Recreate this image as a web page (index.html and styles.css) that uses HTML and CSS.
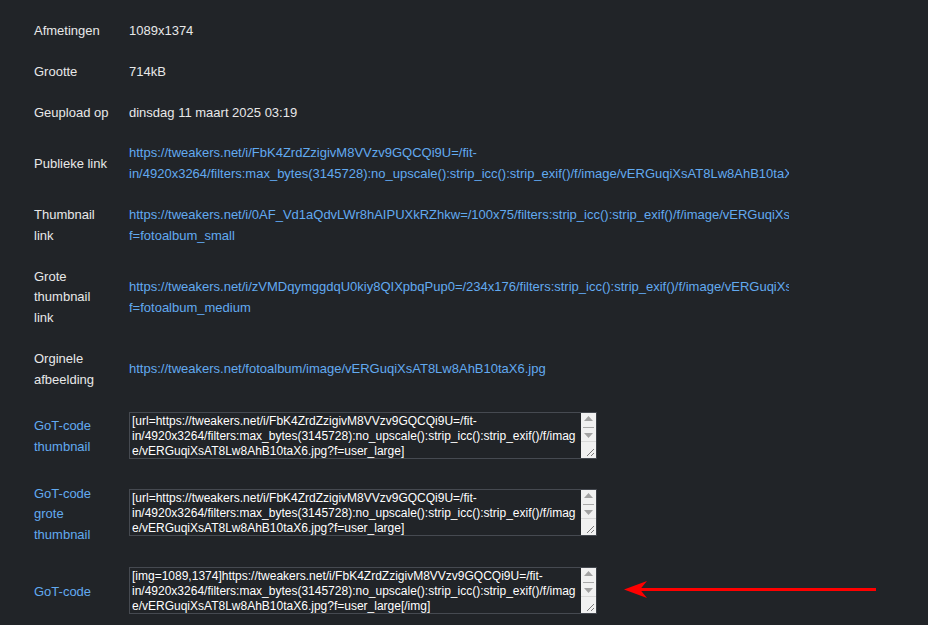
FILE: index.html
```html
<!DOCTYPE html>
<html lang="nl">
<head>
<meta charset="utf-8">
<title>Afbeelding details</title>
<link rel="stylesheet" href="styles.css">
</head>
<body>
<div class="page">
  <div class="details">
    <div class="row"><div class="label">Afmetingen</div><div class="value">1089x1374</div></div>
    <div class="row"><div class="label">Grootte</div><div class="value">714kB</div></div>
    <div class="row"><div class="label">Geupload op</div><div class="value">dinsdag 11 maart 2025 03:19</div></div>
    <div class="row"><div class="label">Publieke link</div><div class="value"><a class="link" href="#">https://tweakers.net/i/FbK4ZrdZzigivM8VVzv9GQCQi9U=/fit-in/4920x3264/filters:max_bytes(3145728):no_upscale():strip_icc():strip_exif()/f/image/vERGuqiXsAT8Lw8AhB10taX6.jpg</a></div></div>
    <div class="row"><div class="label">Thumbnail link</div><div class="value"><a class="link" href="#">https://tweakers.net/i/0AF_Vd1aQdvLWr8hAIPUXkRZhkw=/100x75/filters:strip_icc():strip_exif()/f/image/vERGuqiXsAT8Lw8AhB10taX6.jpg?<wbr>f=fotoalbum_small</a></div></div>
    <div class="row"><div class="label">Grote thumbnail link</div><div class="value"><a class="link" href="#">https://tweakers.net/i/zVMDqymggdqU0kiy8QIXpbqPup0=/234x176/filters:strip_icc():strip_exif()/f/image/vERGuqiXsAT8Lw8AhB10taX6.jpg?<wbr>f=fotoalbum_medium</a></div></div>
    <div class="row"><div class="label">Orginele afbeelding</div><div class="value"><a class="link" href="#">https://tweakers.net/fotoalbum/image/vERGuqiXsAT8Lw8AhB10taX6.jpg</a></div></div>

    <div class="row"><div class="label"><a class="link" href="#">GoT-code thumbnail</a></div><div class="value">
      <div class="ta">
        <div class="ta-text">[url=https://tweakers.net/i/FbK4ZrdZzigivM8VVzv9GQCQi9U=/fit-
in/4920x3264/filters:max_bytes(3145728):no_upscale():strip_icc():strip_exif()/f/imag
e/vERGuqiXsAT8Lw8AhB10taX6.jpg?f=user_large]</div>
        <svg class="ta-bar" width="15" height="45" viewBox="0 0 15 45"><rect width="15" height="45" fill="#f1f1f1"/><polygon points="3,8 7.5,3 12,8" fill="#a3a3a3"/><line x1="2" y1="14.5" x2="13" y2="14.5" stroke="#a8a8a8"/><polygon points="3,20 12,20 7.5,25" fill="#a3a3a3"/><line x1="0" y1="28.5" x2="15" y2="28.5" stroke="#d9d9d9"/><line x1="6" y1="43" x2="13" y2="36" stroke="#7a7a7a"/><line x1="10" y1="43" x2="13" y2="40" stroke="#7a7a7a"/></svg>
      </div>
    </div></div>

    <div class="row"><div class="label"><a class="link" href="#">GoT-code grote thumbnail</a></div><div class="value">
      <div class="ta">
        <div class="ta-text">[url=https://tweakers.net/i/FbK4ZrdZzigivM8VVzv9GQCQi9U=/fit-
in/4920x3264/filters:max_bytes(3145728):no_upscale():strip_icc():strip_exif()/f/imag
e/vERGuqiXsAT8Lw8AhB10taX6.jpg?f=user_large]</div>
        <svg class="ta-bar" width="15" height="45" viewBox="0 0 15 45"><rect width="15" height="45" fill="#f1f1f1"/><polygon points="3,8 7.5,3 12,8" fill="#a3a3a3"/><line x1="2" y1="14.5" x2="13" y2="14.5" stroke="#a8a8a8"/><polygon points="3,20 12,20 7.5,25" fill="#a3a3a3"/><line x1="0" y1="28.5" x2="15" y2="28.5" stroke="#d9d9d9"/><line x1="6" y1="43" x2="13" y2="36" stroke="#7a7a7a"/><line x1="10" y1="43" x2="13" y2="40" stroke="#7a7a7a"/></svg>
      </div>
    </div></div>

    <div class="row"><div class="label"><a class="link" href="#">GoT-code</a></div><div class="value">
      <div class="ta">
        <div class="ta-text">[img=1089,1374]https://tweakers.net/i/FbK4ZrdZzigivM8VVzv9GQCQi9U=/fit-
in/4920x3264/filters:max_bytes(3145728):no_upscale():strip_icc():strip_exif()/f/imag
e/vERGuqiXsAT8Lw8AhB10taX6.jpg?f=user_large[/img]</div>
        <svg class="ta-bar" width="15" height="45" viewBox="0 0 15 45"><rect width="15" height="45" fill="#f1f1f1"/><polygon points="3,8 7.5,3 12,8" fill="#a3a3a3"/><line x1="2" y1="14.5" x2="13" y2="14.5" stroke="#a8a8a8"/><polygon points="3,20 12,20 7.5,25" fill="#a3a3a3"/><line x1="0" y1="28.5" x2="15" y2="28.5" stroke="#d9d9d9"/><line x1="6" y1="43" x2="13" y2="36" stroke="#7a7a7a"/><line x1="10" y1="43" x2="13" y2="40" stroke="#7a7a7a"/></svg>
      </div>
    </div></div>
  </div>

  <svg class="annot" width="928" height="625" viewBox="0 0 928 625">
    <line x1="876" y1="589.5" x2="638" y2="589.5" stroke="#ff0000" stroke-width="3"/>
    <polygon points="624,589.5 647,581 640,589.5 647,598" fill="#ff0000"/>
  </svg>
</div>
</body>
</html>
```

FILE: styles.css
```css
html, body {
  margin: 0;
  padding: 0;
  width: 928px;
  height: 625px;
  overflow: hidden;
  background: #212428;
}

.page {
  position: relative;
  width: 928px;
  height: 625px;
  font-family: "Liberation Sans", Arial, sans-serif;
  font-size: 13px;
  line-height: 1.6;
  color: #e8e8e8;
}

.details {
  display: flex;
  flex-direction: column;
  padding: 11px 0 0 34px;
}

.row {
  display: flex;
  align-items: center;
  column-gap: 18px;
  padding: 10px 0;
}

.label {
  flex: 0 0 77px;
  width: 77px;
}

.value {
  flex: 0 0 660px;
  width: 660px;
  overflow: hidden;
}

.link {
  color: #62aaf0;
  text-decoration: none;
}

.ta {
  display: flex;
  width: 466px;
  height: 45px;
  margin: 1px 0 5px;
  border: 1px solid #464a51;
  border-right: 1px solid #3a3e44;
  background: #212428;
  box-sizing: content-box;
}

.ta-text {
  flex: 1 1 auto;
  width: 449px;
  height: 44px;
  padding: 1px 0 0 2px;
  overflow: hidden;
  font-size: 12px;
  line-height: 15px;
  color: #ffffff;
  white-space: pre;
}

.ta-bar {
  flex: 0 0 15px;
  display: block;
}

.annot {
  position: absolute;
  left: 0;
  top: 0;
  pointer-events: none;
}
```
